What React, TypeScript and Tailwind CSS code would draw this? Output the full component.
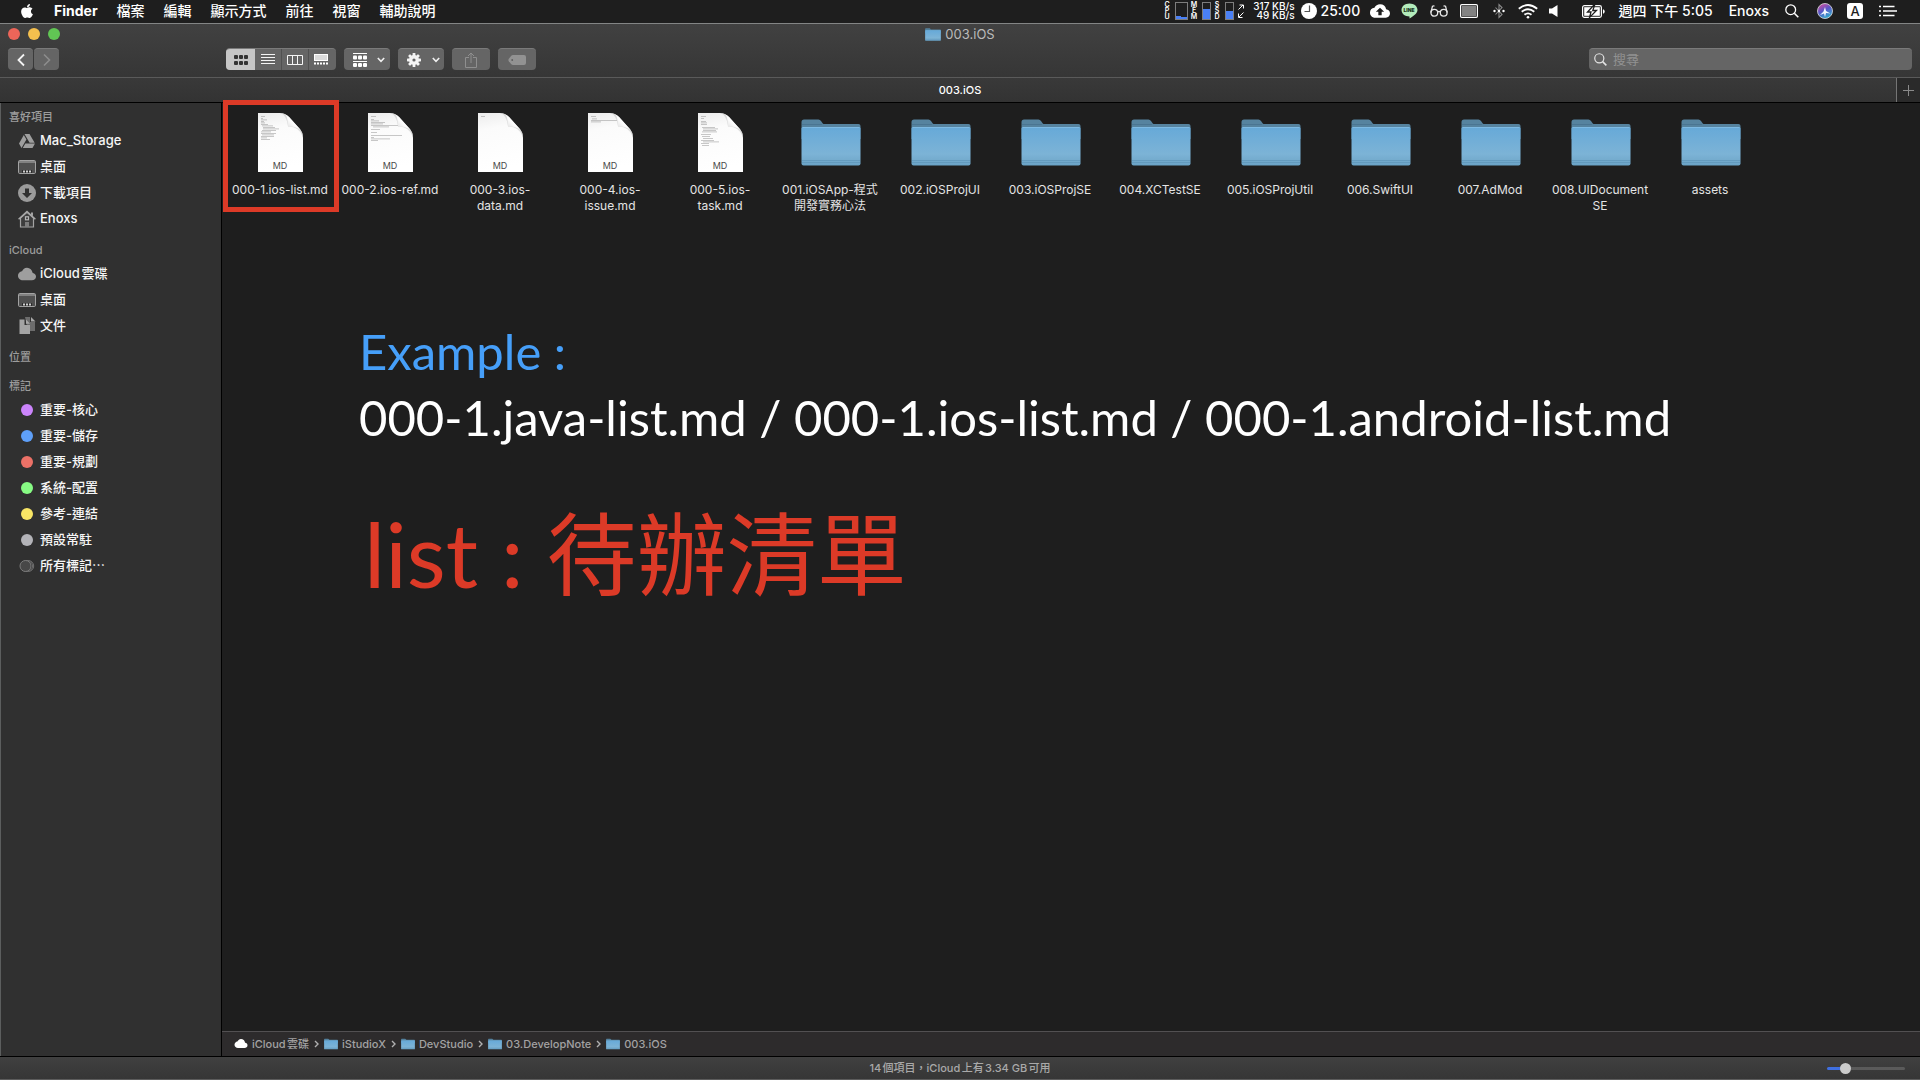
import React from "react";
import { FaApple, FaGoogleDrive } from "react-icons/fa";
import { MdCloudUpload } from "react-icons/md";
import { IoCloud } from "react-icons/io5";

const uiFont = "font-['Inter','Noto_Sans_CJK_TC',sans-serif]";
const noteFont = "font-['Lato','Noto_Sans_CJK_TC',sans-serif]";

/* ---------- Icons ---------- */

function FolderIcon({ className }: { className: string }) {
  return (
    <svg viewBox="0 0 60 47" className={className} aria-hidden="true">
      <defs>
        <linearGradient id="folderFront" x1="0" y1="0" x2="0" y2="1">
          <stop offset="0" stopColor="#66a9d8" />
          <stop offset="0.7" stopColor="#7cb3d6" />
          <stop offset="0.86" stopColor="#74abcd" />
          <stop offset="1" stopColor="#6aa3c6" />
        </linearGradient>
      </defs>
      <path d="M0.5 3Q0.5 0.5 3 0.5H17.5Q19 0.5 20 2L21.8 4.5Q22.300 5 23.500 5H57.500Q59.500 5 59.500 7V20H0.500Z" fill="#56839f" />
      <path d="M1 5.500H21" stroke="#4a7592" strokeWidth="1" />
      <path d="M0.500 9.500Q0.500 8 2 8H58Q59.500 8 59.500 9.500V44.500Q59.500 46.500 57.500 46.500H2.500Q0.500 46.500 0.500 44.500Z" fill="url(#folderFront)" />
      <path d="M1 41.500H59M1 43.500H59" stroke="#5f97ba" strokeWidth="0.800" />
      <path d="M1.500 8.500H58.500" stroke="#84bfe6" strokeWidth="0.800" />
    </svg>
  );
}

type Mark = [number, number, number];

function DocIcon({ marks }: { marks: Mark[] }) {
  return (
    <svg viewBox="0 0 45 59" className="h-[59px] w-[45px]" aria-hidden="true">
      <defs>
        <linearGradient id="docPaper" x1="0" y1="0" x2="0.15" y2="1">
          <stop offset="0" stopColor="#ececec" />
          <stop offset="0.3" stopColor="#fbfbfb" />
          <stop offset="1" stopColor="#ffffff" />
        </linearGradient>
        <linearGradient id="docCurl" x1="0" y1="1" x2="0.700" y2="0.200">
          <stop offset="0" stopColor="#d4d4d4" />
          <stop offset="0.600" stopColor="#fcfcfc" />
          <stop offset="1" stopColor="#ffffff" />
        </linearGradient>
      </defs>
      <path d="M0 0H22Q27 0 31 4L41 15Q45 19 45 25V59H0Z" fill="url(#docPaper)" />
      {marks.map(([x, y, w], i) => (
        <rect key={i} x={x} y={y} width={w} height="0.800" fill="#8d8d8d" opacity="0.600" />
      ))}
      <path d="M22 0Q29 2 30 13.500Q41 13 45 24Q45 19 41 15L31 4Q27 0 22 0Z" fill="#c9c9c9" opacity="0.600" />
      <path d="M27.500 1.500Q30 5 30 13.500Q38 13 42.500 17L31 4Q29.500 2.500 27.500 1.500Z" fill="url(#docCurl)" />
    </svg>
  );
}

function DesktopIcon() {
  return (
    <svg viewBox="0 0 18 14" className="h-3.5 w-[18px]" aria-hidden="true">
      <rect x="0.500" y="0.500" width="17" height="13" rx="1.200" fill="#505050" stroke="#a3a3a3" />
      <path d="M1 2H17" stroke="#8f8f8f" strokeWidth="1.600" />
      <rect x="4" y="10" width="10" height="3" fill="#2b2b2b" />
      <path d="M5 10.500h2v2H5zM8 10.500h2v2H8zM11 10.500h2v2h-2z" fill="#d0d0d0" />
    </svg>
  );
}

function DownloadIcon() {
  return (
    <svg viewBox="0 0 18 18" className="size-[18px]" aria-hidden="true">
      <circle cx="9" cy="9" r="9" fill="#9b9b9b" />
      <path d="M7 4.500h4V9h3L9 14 4 9h3Z" fill="#303030" />
    </svg>
  );
}

function HomeIcon() {
  return (
    <svg viewBox="0 0 18 18" className="size-[18px]" aria-hidden="true">
      <path d="M2.500 8V17H15.500V8L9 2.200Z" fill="#3d3d3d" stroke="#a3a3a3" strokeWidth="1.200" />
      <path d="M0.600 9.300 9 1.500l8.400 7.800" fill="none" stroke="#a8a8a8" strokeWidth="1.500" />
      <path d="M13 2.500h2v4l-2-2Z" fill="#a3a3a3" />
      <rect x="7.500" y="6.800" width="3" height="3" fill="none" stroke="#b5b5b5" strokeWidth="1.200" />
      <rect x="7" y="12" width="4" height="5" fill="#7d7d7d" />
    </svg>
  );
}

function DocumentsIcon() {
  return (
    <svg viewBox="0 0 17 17" className="size-[17px]" aria-hidden="true">
      <path d="M6 0h5v5h5v9H9Z" fill="#6c6c6c" />
      <path d="M12 0l4.500 4.500H12Z" fill="#a8a8a8" />
      <path d="M0.500 2.500H5.500V8H11V17H0.500Z" fill="#a3a3a3" />
      <path d="M7 2.500 11 6.800H7Z" fill="#a8a8a8" />
    </svg>
  );
}

function TagDot({ color }: { color: string }) {
  return (
    <svg viewBox="0 0 14 14" className="size-3.5" aria-hidden="true">
      <circle cx="7" cy="7" r="6" fill={color} />
    </svg>
  );
}

function AllTagsIcon() {
  return (
    <svg viewBox="0 0 16 14" className="h-3.5 w-4" aria-hidden="true">
      <circle cx="9.200" cy="7" r="5.500" fill="#303030" stroke="#6f6f6f" />
      <circle cx="8" cy="7" r="5.500" fill="#303030" stroke="#6f6f6f" />
      <circle cx="6.500" cy="7" r="5.500" fill="#484848" stroke="#7b7b7b" />
    </svg>
  );
}

function SearchIcon({ className }: { className: string }) {
  return (
    <svg viewBox="0 0 14 14" className={className} fill="none" stroke="currentColor" aria-hidden="true">
      <circle cx="5.700" cy="5.700" r="4.900" strokeWidth="1.300" />
      <path d="M9.300 9.300 13.300 13.300" strokeWidth="1.600" />
    </svg>
  );
}

function ChevronDown() {
  return (
    <svg viewBox="0 0 8 6" className="h-1.5 w-2" fill="none" stroke="#f0f0f0" strokeWidth="1.600" aria-hidden="true">
      <path d="M0.800 1 4 4.300 7.200 1" />
    </svg>
  );
}

function GearIcon() {
  return (
    <svg viewBox="-8 -8 16 16" className="size-4" aria-hidden="true">
      {[0, 45, 90, 135].map((a) => (
        <rect key={a} x="-1.400" y="-7" width="2.800" height="14" rx="0.600" fill="#f4f4f4" transform={`rotate(${a})`} />
      ))}
      <circle r="4.900" fill="#f4f4f4" />
      <circle r="1.600" fill="#656565" />
    </svg>
  );
}

function LineAppIcon() {
  return (
    <div className="relative ml-2.5 h-4 w-[17px]">
      <svg viewBox="0 0 17 16" className="h-4 w-[17px]" aria-hidden="true">
        <path d="M8.500 0.500C13 0.500 16.500 3.300 16.500 7C16.500 10.500 12 13.500 8.500 15.500V13.500C4 13.500 0.500 10.700 0.500 7S4 0.500 8.500 0.500Z" fill="#b3ecbb" />
      </svg>
      <span className="absolute inset-x-0 top-1 text-center text-[5px] leading-[6px] font-black text-[#1e3a24]">LINE</span>
    </div>
  );
}

/* ---------- Menu bar ---------- */

function Meter({ label, children, width }: { label: string; children: React.ReactNode; width: string }) {
  return (
    <div className="flex items-center gap-[5px]">
      <span className="flex w-[5px] flex-col items-center text-[7px] leading-[6px] font-semibold">
        {label.split("").map((c, i) => (
          <span key={i}>{c}</span>
        ))}
      </span>
      <div className={`flex h-[18px] items-end border border-[#7d7d7d] ${width}`}>{children}</div>
    </div>
  );
}

function MenuBar() {
  const menus = ["檔案", "編輯", "顯示方式", "前往", "視窗", "輔助說明"];
  return (
    <header className="flex h-[23px] shrink-0 items-center justify-between bg-[#1e1e1e] pr-[23px] pb-px pl-[19px] text-sm leading-[22px] font-medium whitespace-nowrap text-white">
      <nav className="flex items-center gap-[19px]">
        <button aria-label="Apple">
          <FaApple className="size-4" />
        </button>
        <button className="font-bold">Finder</button>
        {menus.map((m) => (
          <button key={m}>{m}</button>
        ))}
      </nav>
      <div className="flex items-center">
        <div className="flex items-center gap-1">
          <Meter label="CPU" width="w-[13px]">
            <span className="h-[3px] w-1/2 bg-[#4a80f5]" />
            <span className="h-[2px] w-1/2 bg-[#4a80f5]" />
          </Meter>
          <Meter label="MEM" width="w-[9px]">
            <span className="h-[10px] w-full bg-[#4a80f5]" />
          </Meter>
          <Meter label="SSD" width="w-[9px]">
            <span className="h-[8px] w-full bg-[#4a80f5]" />
          </Meter>
          <svg viewBox="0 0 6 14" className="h-3.5 w-1.5" fill="none" stroke="#fff" strokeWidth="1" aria-hidden="true">
            <path d="M0.500 5.500 5 1M1.500 1H5.500V4.500M5.500 8.500 1 13M0.500 9.500V13.500H4.500" />
          </svg>
        </div>
        <div className="ml-[9px] w-[42px] text-right text-[10px] leading-[9px]">
          <div>317 KB/s</div>
          <div>49 KB/s</div>
        </div>
        <svg viewBox="0 0 16 16" className="ml-1.5 size-4" aria-hidden="true">
          <circle cx="8" cy="8" r="8" fill="#fff" />
          <path d="M8.500 2.500V8.500H3.500" fill="none" stroke="#555" strokeWidth="1.200" />
        </svg>
        <span className="ml-1 w-[39px] text-sm leading-5">25:00</span>
        <MdCloudUpload className="ml-[9px] h-5 w-[22px]" />
        <LineAppIcon />
        <svg viewBox="0 0 18 12" className="ml-3 h-3 w-[18px]" fill="none" stroke="#e6e6e6" strokeWidth="1.300" aria-hidden="true">
          <circle cx="4.300" cy="7.800" r="3.400" />
          <circle cx="13.700" cy="7.800" r="3.400" />
          <path d="M7.600 7Q9 5.800 10.400 7M0.900 7.500 2.500 1.200Q3.500 0.500 4.500 1.200M17.100 7.500 15.500 1.200Q14.500 0.500 13.500 1.200" />
        </svg>
        <svg viewBox="0 0 18 14" className="ml-3 h-3.5 w-[18px]" aria-hidden="true">
          <rect x="0.600" y="0.600" width="16.800" height="12.800" rx="1.200" fill="#1e1e1e" stroke="#fff" strokeWidth="1.200" />
          <rect x="2" y="2" width="14" height="10" fill="#828282" />
        </svg>
        <svg viewBox="0 0 12 16" className="ml-[15px] h-4 w-3" aria-hidden="true">
          <path d="M2.500 4.500 9 11.500 6 14.500V1.500L9 4.500 2.500 11.500" fill="none" stroke="#8c8c8c" strokeWidth="1.100" />
          <circle cx="1.500" cy="8" r="1.200" fill="#fff" />
          <circle cx="6" cy="8" r="1.200" fill="#fff" />
          <circle cx="10.500" cy="8" r="1.200" fill="#fff" />
        </svg>
        <svg viewBox="0 0 20 15" className="ml-[13px] h-[15px] w-5" fill="none" stroke="#fff" strokeWidth="1.800" aria-hidden="true">
          <path d="M0.800 4.800Q10 -2.800 19.200 4.800M3.700 7.800Q10 2.700 16.300 7.800M6.500 10.700Q10 8 13.500 10.700" />
          <circle cx="10" cy="13.200" r="1.300" fill="#fff" stroke="none" />
        </svg>
        <svg viewBox="0 0 9 12" className="ml-[11px] h-3 w-[9px]" aria-hidden="true">
          <path d="M0 3.500H3L8.500 0V12L3 8.500H0Z" fill="#fff" />
        </svg>
        <svg viewBox="0 0 23 13" className="ml-6 h-[13px] w-[23px]" aria-hidden="true">
          <rect x="0.600" y="0.600" width="18.800" height="11.800" rx="1.800" fill="none" stroke="#fff" strokeWidth="1.200" />
          <path d="M2.200 2.200H17.800V10.800H2.200Z" fill="#fff" />
          <path d="M11.500 0.500 5.500 7H9L7.500 12.500 14.500 5.500H10.800L12.500 0.500Z" fill="#fff" stroke="#1e1e1e" strokeWidth="1.300" />
          <path d="M21 4.200Q22.700 4.500 22.700 6.500T21 8.800Z" fill="#fff" />
        </svg>
        <span className="ml-3.5">週四 下午 5:05</span>
        <span className="ml-4">Enoxs</span>
        <SearchIcon className="ml-4 size-3.5" />
        <svg viewBox="0 0 16 16" className="ml-[18px] size-4" aria-hidden="true">
          <defs>
            <linearGradient id="siri" x1="0.200" y1="0" x2="0.700" y2="1">
              <stop offset="0" stopColor="#d84d9c" />
              <stop offset="0.450" stopColor="#5b56c8" />
              <stop offset="1" stopColor="#2fb4cf" />
            </linearGradient>
          </defs>
          <circle cx="8" cy="8" r="7.500" fill="url(#siri)" stroke="#cfcfd8" strokeWidth="0.900" />
          <path d="M8 4 9 8 13.500 10.500 9 10 8 14 7 10.500 3 12 6.500 8.500Z" fill="#f3f6ff" />
        </svg>
        <span className="ml-3.5 flex size-4 items-center justify-center rounded-[3px] bg-white text-[13px] leading-4 font-medium text-[#1e1e1e]">A</span>
        <svg viewBox="0 0 18 12" className="ml-4 h-3 w-[18px]" stroke="#fff" strokeWidth="1.700" aria-hidden="true">
          <path d="M0 1.500H2M4 1.500H15.500M0 6H2M4 6H18M0 10.500H2M4 10.500H15.500" />
        </svg>
      </div>
    </header>
  );
}

/* ---------- Window chrome ---------- */

const toolButton =
  "flex h-[22px] items-center justify-center rounded-[4px] border-t border-[#7a7a7a] bg-[#656565]";

function Toolbar() {
  return (
    <div className="flex items-center px-2">
      <div className="flex gap-px">
        <button aria-label="Back" className={`${toolButton} w-[25px]`}>
          <svg viewBox="0 0 8 14" className="h-3.5 w-2" fill="none" stroke="#f4f4f4" strokeWidth="1.800">
            <path d="M7 1.500 1.500 7 7 12.500" />
          </svg>
        </button>
        <button aria-label="Forward" className={`${toolButton} w-[25px]`}>
          <svg viewBox="0 0 8 14" className="h-3.5 w-2" fill="none" stroke="#8c8c8c" strokeWidth="1.600">
            <path d="M1 1.500 6.500 7 1 12.500" />
          </svg>
        </button>
      </div>
      <div className="ml-[167px] flex h-[22px] overflow-hidden rounded-[4px] border-t border-[#7a7a7a] bg-[#656565]">
        <button aria-label="Icon view" className="flex w-[29px] items-center justify-center bg-[#c6c6c6]">
          <svg viewBox="0 0 14 10" className="h-2.5 w-3.5" fill="#333">
            {[0, 5, 10].map((x) => (
              <g key={x}>
                <rect x={x} y="0" width="4" height="4" rx="1" />
                <rect x={x} y="6" width="4" height="4" rx="1" />
              </g>
            ))}
          </svg>
        </button>
        <button aria-label="List view" className="flex w-[27px] items-center justify-center border-r border-[#505050]">
          <svg viewBox="0 0 14 11" className="h-[11px] w-3.5" stroke="#f4f4f4">
            <path d="M0 0.500H14M0 3.500H14M0 6.500H14M0 9.500H14" />
          </svg>
        </button>
        <button aria-label="Column view" className="flex w-[27px] items-center justify-center border-r border-[#505050]">
          <svg viewBox="0 0 16 10" className="h-2.5 w-4" fill="none" stroke="#f4f4f4">
            <path d="M0.500 0.500H15.500V9.500H0.500ZM5.500 0.500V9.500M10.500 0.500V9.500" />
          </svg>
        </button>
        <button aria-label="Gallery view" className="flex w-[27px] items-center justify-center pr-1">
          <svg viewBox="0 0 14 11" className="h-[11px] w-3.5">
            <rect x="0.500" y="0.500" width="13" height="6" fill="#dcdcdc" stroke="#fff" />
            <path d="M0 9.500H14" stroke="#fff" strokeWidth="2" strokeDasharray="2 1" />
          </svg>
        </button>
      </div>
      <button aria-label="Group items" className={`${toolButton} ml-2 w-[46px] gap-2.5 pl-1`}>
        <svg viewBox="0 0 14 14" className="size-3.5" fill="#fff">
          <path d="M0 0H14V1H0ZM0 8H14V9H0Z" />
          {[0, 5, 10].map((x) => (
            <g key={x}>
              <rect x={x} y="2.500" width="4" height="4" rx="1" />
              <rect x={x} y="10" width="4" height="4" rx="1" />
            </g>
          ))}
        </svg>
        <ChevronDown />
      </button>
      <button aria-label="Actions" className={`${toolButton} ml-2 w-[46px] gap-2.5 pl-1`}>
        <GearIcon />
        <ChevronDown />
      </button>
      <button aria-label="Share" className={`${toolButton} ml-2 w-[38px]`}>
        <svg viewBox="0 0 12 16" className="h-4 w-3" fill="none" stroke="#8f8f8f">
          <path d="M4 5.500H0.500V15.500H11.500V5.500H8M6 11V1M3 4 6 1 9 4" />
        </svg>
      </button>
      <button aria-label="Tags" className={`${toolButton} ml-2 w-[38px]`}>
        <svg viewBox="0 0 18 10" className="h-2.5 w-[18px]">
          <path d="M5 0H16Q18 0 18 2V8Q18 10 16 10H5Q4 10 3.300 9.300L0.800 6.300Q0 5 0.800 3.700L3.300 0.700Q4 0 5 0Z" fill="#929292" />
          <circle cx="4.200" cy="5" r="0.900" fill="#5d5d5d" />
        </svg>
      </button>
      <label className="ml-auto flex h-[22px] w-[323px] items-center gap-1.5 rounded-[4px] border-t border-[#7a7a7a] bg-[#656565] px-[5px] pb-px">
        <SearchIcon className="size-[13px] text-[#e4e4e4]" />
        <input
          type="text"
          aria-label="搜尋"
          placeholder="搜尋"
          className="min-w-0 flex-1 bg-transparent text-[13px] leading-5 outline-none placeholder:text-[#929292]"
        />
      </label>
    </div>
  );
}

function TitleBar() {
  return (
    <div className="flex h-[55px] shrink-0 flex-col border-t border-b border-t-[#838585] border-b-[#5a5a5a] bg-linear-to-b from-[#414141] to-[#363636]">
      <div className="flex h-6 items-center justify-center pb-1">
        <div className="flex flex-1 gap-2 pl-2">
          <button aria-label="Close" className="size-3 rounded-full bg-[#ec6559]" />
          <button aria-label="Minimize" className="size-3 rounded-full bg-[#f4bf4e]" />
          <button aria-label="Zoom" className="size-3 rounded-full bg-[#61c654]" />
        </div>
        <h1 className="flex items-center gap-1 text-[13px] leading-5 text-[#bababa]">
          <FolderIcon className="h-[13px] w-4" />
          003.iOS
        </h1>
        <div className="flex-1 pl-2" />
      </div>
      <Toolbar />
    </div>
  );
}

function TabBar() {
  return (
    <div className="flex h-[25px] shrink-0 border-b border-black bg-linear-to-b from-[#393939] to-[#333333]">
      <div className="flex flex-1 items-center justify-center pl-6 text-[11px] leading-4 font-medium text-white">
        003.iOS
      </div>
      <button aria-label="New tab" className="flex w-6 items-center justify-center border-l border-[#757575] bg-[#2a2a2a]">
        <svg viewBox="0 0 11 11" className="size-[11px]" stroke="#8a8a8a">
          <path d="M5.500 0V11M0 5.500H11" />
        </svg>
      </button>
    </div>
  );
}

/* ---------- Sidebar ---------- */

const sections: { title: string; items: { label: string; icon: React.ReactNode }[] }[] = [
  {
    title: "喜好項目",
    items: [
      { label: "Mac_Storage", icon: <FaGoogleDrive className="size-4 text-[#9e9e9e]" /> },
      { label: "桌面", icon: <DesktopIcon /> },
      { label: "下載項目", icon: <DownloadIcon /> },
      { label: "Enoxs", icon: <HomeIcon /> },
    ],
  },
  {
    title: "iCloud",
    items: [
      { label: "iCloud雲碟", icon: <IoCloud className="size-[18px] text-[#9e9e9e]" /> },
      { label: "桌面", icon: <DesktopIcon /> },
      { label: "文件", icon: <DocumentsIcon /> },
    ],
  },
  { title: "位置", items: [] },
  {
    title: "標記",
    items: [
      { label: "重要-核心", icon: <TagDot color="#cb84fb" /> },
      { label: "重要-儲存", icon: <TagDot color="#5e9ff8" /> },
      { label: "重要-規劃", icon: <TagDot color="#ec7167" /> },
      { label: "系統-配置", icon: <TagDot color="#87fb84" /> },
      { label: "參考-連結", icon: <TagDot color="#f8e565" /> },
      { label: "預設常駐", icon: <TagDot color="#b3b3b8" /> },
      { label: "所有標記⋯", icon: <AllTagsIcon /> },
    ],
  },
];

function Sidebar() {
  return (
    <aside className="flex w-[222px] shrink-0 flex-col gap-[9px] border-r border-l border-r-black border-l-[#5c5e5e] bg-[#303030] pt-1">
      {sections.map((s) => (
        <section key={s.title}>
          <h2 className="pl-2 text-[11px] leading-5 font-medium text-[#9d9d9d]">{s.title}</h2>
          <ul>
            {s.items.map((it) => (
              <li key={it.label}>
                <a href="#" className="flex h-[26px] items-center gap-[3px] pt-px pl-4 text-[13px] font-medium text-[#f6f6f6] [text-autospace:normal]">
                  <span className="flex w-5 justify-center">{it.icon}</span>
                  {it.label}
                </a>
              </li>
            ))}
          </ul>
        </section>
      ))}
    </aside>
  );
}

/* ---------- Files ---------- */

type Entry = { lines: string[]; marks?: Mark[]; marked?: boolean };

const entries: Entry[] = [
  {
    lines: ["000-1.ios-list.md"],
    marked: true,
    marks: [
      [3, 3, 4], [3, 5, 2], [3, 6.5, 6], [3, 8, 3], [3, 9.5, 4], [3, 11, 7], [4, 12.500, 11], [5, 14, 12], [5, 15.500, 16],
      [4, 17, 14], [3, 18.500, 10], [3, 20, 15], [4, 21.500, 12], [3, 23, 13], [3, 24.500, 6], [3, 26, 9],
    ],
  },
  {
    lines: ["000-2.ios-ref.md"],
    marks: [
      [3, 3, 5], [3, 6, 3], [3, 7.500, 8], [3, 9, 14], [3, 10.500, 12], [3, 12, 32], [5, 13.500, 16], [3, 16, 9],
      [3, 19, 6], [3, 22, 31], [3, 24, 3], [3, 25.500, 19], [3, 27, 7],
    ],
  },
  { lines: ["000-3.ios-", "data.md"], marks: [[3, 3, 4]] },
  { lines: ["000-4.ios-", "issue.md"], marks: [[3, 3, 5], [4, 5.500, 5], [3, 7, 26], [3, 8.500, 10]] },
  {
    lines: ["000-5.ios-", "task.md"],
    marks: [
      [3, 3, 5], [3, 5, 3], [3, 8, 5], [3, 9.500, 6], [3, 11, 6], [4, 14, 13], [5, 15.500, 15], [5, 17, 13], [4, 18.500, 15],
      [3, 21, 10], [4, 23, 8], [5, 25, 10], [3, 27, 13], [5, 28.500, 16], [3, 30, 8], [4, 32, 7],
    ],
  },
  { lines: ["001.iOSApp-程式", "開發實務心法"] },
  { lines: ["002.iOSProjUI"] },
  { lines: ["003.iOSProjSE"] },
  { lines: ["004.XCTestSE"] },
  { lines: ["005.iOSProjUtil"] },
  { lines: ["006.SwiftUI"] },
  { lines: ["007.AdMod"] },
  { lines: ["008.UIDocument", "SE"] },
  { lines: ["assets"] },
];

function FileEntry({ entry }: { entry: Entry }) {
  return (
    <li className="relative flex w-[110px] flex-col items-center">
      <div className="flex h-[59px] items-center justify-center">
        {entry.marks ? (
          <div className="relative">
            <DocIcon marks={entry.marks} />
            <span className="absolute inset-x-0 bottom-0 text-center text-[9px] leading-3 text-[#4a4a4a]">MD</span>
          </div>
        ) : (
          <FolderIcon className="ml-0.5 h-[47px] w-[60px]" />
        )}
      </div>
      <p className="mt-2.5 text-center text-xs leading-4 whitespace-nowrap text-[#e4e4e4]">
        {entry.lines.map((l) => (
          <span key={l} className="block">
            {l}
          </span>
        ))}
      </p>
      {entry.marked && <div className="absolute -top-[13px] -right-1 -left-[2px] z-10 h-[112px] border-[5px] border-[#dc3a27]" />}
    </li>
  );
}

function PathBar() {
  const crumbs = ["iCloud雲碟", "iStudioX", "DevStudio", "03.DevelopNote", "003.iOS"];
  return (
    <nav className="flex h-[25px] shrink-0 items-center border-t border-[#525052] bg-[#2d2b2c] pb-px pl-3 text-[11px] leading-4 font-medium text-[#a3a2a3] [text-autospace:normal]">
      {crumbs.map((c, i) => (
        <React.Fragment key={c}>
          {i > 0 && (
            <svg viewBox="0 0 5 8" className="mx-[5px] h-2 w-[5px]" fill="none" stroke="#b0b0b0" strokeWidth="1.400" aria-hidden="true">
              <path d="M1 1 4 4 1 7" />
            </svg>
          )}
          <a href="#" className="flex items-center gap-1">
            {i === 0 ? <IoCloud className="h-[13px] w-3.5 text-white" /> : <FolderIcon className="h-3 w-3.5" />}
            {c}
          </a>
        </React.Fragment>
      ))}
    </nav>
  );
}

function StatusBar() {
  return (
    <footer className="flex h-6 shrink-0 items-center border-t border-b border-t-black border-b-[#5c5c5c] bg-linear-to-b from-[#404040] to-[#363636]">
      <div className="flex-1 pr-[15px]" />
      <p className="text-[11px] leading-4 font-medium text-[#a9a9a9] [text-autospace:normal]">14個項目，iCloud上有3.34 GB可用</p>
      <div className="flex flex-1 justify-end pr-[15px]">
        <input
          type="range"
          aria-label="Icon size"
          defaultValue={20}
          className="h-[3px] w-[78px] appearance-none rounded-full bg-linear-to-r from-[#3f6fe0] from-25% to-[#5a5a5a] to-25% [&::-webkit-slider-thumb]:size-[11px] [&::-webkit-slider-thumb]:appearance-none [&::-webkit-slider-thumb]:rounded-full [&::-webkit-slider-thumb]:bg-[#cccccc]"
        />
      </div>
    </footer>
  );
}

export default function App() {
  return (
    <div className={`flex min-h-screen flex-col bg-[#1e1e1e] ${uiFont}`}>
      <MenuBar />
      <TitleBar />
      <TabBar />
      <div className="flex flex-1">
        <Sidebar />
        <div className="flex min-w-0 flex-1 flex-col">
          <main className="flex-1 pt-2.5 pl-[3px]">
            <ul className="flex flex-wrap">
              {entries.map((e) => (
                <FileEntry key={e.lines[0]} entry={e} />
              ))}
            </ul>
            <div className={`mt-[104px] pl-[134px] ${noteFont}`}>
              <p className="text-[49px] leading-[66px] text-[#469ff9]">Example :</p>
              <p className="text-[49px] leading-[66px] text-white">
                000-1.java-list.md / 000-1.ios-list.md / 000-1.android-list.md
              </p>
              <p className="mt-12 pl-[5px] text-[90px] leading-[110px] text-[#dc3a27]">list : 待辦清單</p>
            </div>
          </main>
          <PathBar />
        </div>
      </div>
      <StatusBar />
    </div>
  );
}
